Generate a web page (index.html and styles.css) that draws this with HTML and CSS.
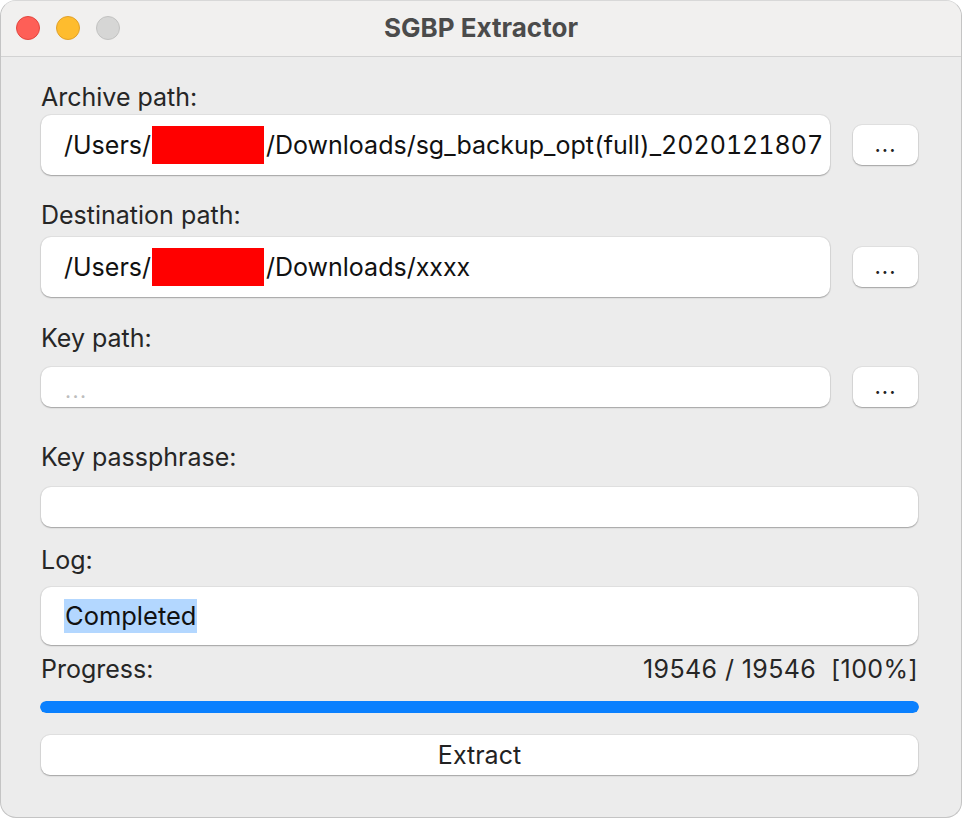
FILE: index.html
```html
<!DOCTYPE html>
<html lang="en">
<head>
<meta charset="utf-8">
<title>SGBP Extractor</title>
<link rel="stylesheet" href="styles.css">
</head>
<body>
<div class="window">
  <div class="titlebar">
    <div class="lights">
      <span class="light light-close"></span>
      <span class="light light-min"></span>
      <span class="light light-max"></span>
    </div>
    <div class="title">SGBP Extractor</div>
  </div>
  <div class="content">
    <div class="label lbl-archive">Archive path:</div>
    <div class="path-row row-archive">
      <div class="field field-tall"><span class="field-text">/Users/<span class="redact"></span>/Downloads/sg_backup_opt(full)_2020121807</span></div>
      <div class="btn btn-browse">...</div>
    </div>

    <div class="label lbl-dest">Destination path:</div>
    <div class="path-row row-dest">
      <div class="field field-tall"><span class="field-text">/Users/<span class="redact"></span>/Downloads/xxxx</span></div>
      <div class="btn btn-browse">...</div>
    </div>

    <div class="label lbl-key">Key path:</div>
    <div class="path-row row-key">
      <div class="field field-short"><span class="placeholder">...</span></div>
      <div class="btn btn-browse">...</div>
    </div>

    <div class="label lbl-pass">Key passphrase:</div>
    <div class="field field-short field-pass"></div>

    <div class="label lbl-log">Log:</div>
    <div class="field log-box"><span class="selected">Completed</span></div>

    <div class="progress-head">
      <span class="label-text">Progress:</span>
      <span class="label-text progress-count">19546 / 19546&nbsp;&nbsp;[100%]</span>
    </div>
    <div class="progress-bar"><div class="progress-fill"></div></div>

    <div class="btn btn-extract">Extract</div>
  </div>
</div>
</body>
</html>
```

FILE: styles.css
```css
html, body {
  margin: 0;
  padding: 0;
  background: #ffffff;
}

body {
  font-family: Inter, "Noto Sans", "Liberation Sans", sans-serif;
  color: #222222;
}

.window {
  width: 962px;
  height: 818px;
  box-sizing: border-box;
  border: 1px solid #c4c4c4;
  border-top-color: #d8d8d8;
  border-radius: 16px;
  overflow: hidden;
  background: #ececec;
  display: flex;
  flex-direction: column;
}

.titlebar {
  height: 55px;
  flex: none;
  background: #f1f0ef;
  border-bottom: 1px solid #d3d3d3;
  position: relative;
  display: flex;
  align-items: center;
  justify-content: center;
}

.lights {
  position: absolute;
  left: 15px;
  top: 15px;
  display: flex;
  gap: 16px;
}

.light {
  width: 24px;
  height: 24px;
  box-sizing: border-box;
  border-radius: 50%;
  display: block;
}

.light-close { background: #fe5f57; border: 1px solid #e2463f; }
.light-min { background: #febc2e; border: 1px solid #e0a02a; }
.light-max { background: #d6d6d5; border: 1px solid #c2c2c1; }

.title {
  font-weight: 700;
  font-size: 26px;
  color: #4b4b4b;
  margin-top: -2px;
}

.content {
  flex: 1;
  padding: 26px 43px 0 40px;
  display: flex;
  flex-direction: column;
}

.label, .label-text {
  font-size: 25px;
  line-height: 28px;
  color: #262626;
}

.progress-count {
  letter-spacing: 0.4px;
}

.lbl-archive { margin-bottom: 4px; }
.lbl-dest { margin-top: 26px; margin-bottom: 8px; }
.lbl-key { margin-top: 27px; margin-bottom: 15px; }
.lbl-pass { margin-top: 36px; margin-bottom: 16px; }
.lbl-log { margin-top: 19px; margin-bottom: 13px; }

.path-row {
  display: flex;
  align-items: center;
  gap: 23px;
}

.field {
  flex: 1;
  background: #ffffff;
  border-radius: 10px;
  box-shadow: 0 0 0 1px rgba(0, 0, 0, 0.05), 0 1px 1.5px rgba(0, 0, 0, 0.28);
  padding-left: 23px;
  padding-right: 2px;
  display: flex;
  align-items: center;
  overflow: hidden;
  white-space: nowrap;
  min-width: 0;
}

.field-tall { height: 60px; }
.field-short { height: 40px; }
.field-pass { flex: none; }

.field-text {
  flex: 1;
  min-width: 0;
  overflow: hidden;
  font-size: 25px;
  font-variant-numeric: tabular-nums;
  color: #111111;
  display: flex;
  align-items: center;
}

.redact {
  flex: none;
  display: inline-block;
  width: 112px;
  height: 38px;
  background: #ff0000;
  margin: 0 2px 0 1px;
}

.placeholder {
  font-size: 21px;
  color: #bdbdbd;
  letter-spacing: 1.5px;
  margin-top: 6px;
  margin-left: 1px;
}

.btn {
  background: #ffffff;
  border-radius: 9px;
  box-shadow: 0 0 0 1px rgba(0, 0, 0, 0.05), 0 1px 1.5px rgba(0, 0, 0, 0.28);
  display: flex;
  align-items: center;
  justify-content: center;
  color: #222222;
}

.btn-browse {
  flex: none;
  width: 65px;
  height: 40px;
  font-size: 22px;
  letter-spacing: 1px;
  line-height: 1;
  padding-bottom: 2px;
  box-sizing: border-box;
}

.log-box {
  flex: none;
  height: 58px;
}

.selected {
  font-size: 25.5px;
  line-height: 34px;
  background: #b3d7ff;
  color: #111111;
  display: inline-block;
  padding: 0 1px;
}

.progress-head {
  margin-top: 10px;
  display: flex;
  justify-content: space-between;
}

.progress-bar {
  margin: 18px -1px 0 -1px;
  height: 12px;
  border-radius: 6px;
  background: #dcdcdc;
  overflow: hidden;
}

.progress-fill {
  width: 100%;
  height: 100%;
  background: #0a80fe;
  border-radius: 6px;
}

.btn-extract {
  margin-top: 22px;
  height: 40px;
  font-size: 25px;
}
```
